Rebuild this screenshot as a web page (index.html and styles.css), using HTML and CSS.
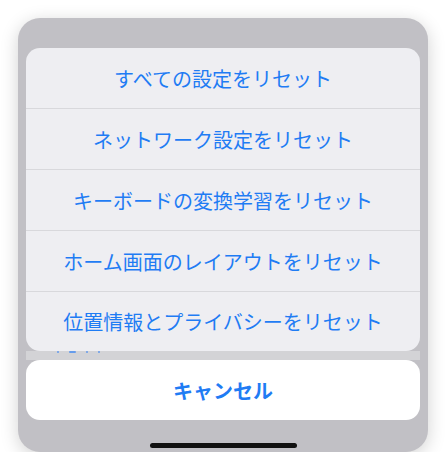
FILE: index.html
```html
<!DOCTYPE html>
<html lang="ja">
<head>
  <meta charset="UTF-8">
  <meta name="viewport" content="width=device-width, initial-scale=1">
  <title>リセット</title>
  <link rel="stylesheet" href="styles.css">
</head>
<body>
  <div class="phone">
    <div class="sheet">
      <div class="action-group">
        <button class="action">すべての設定をリセット</button>
        <button class="action">ネットワーク設定をリセット</button>
        <button class="action">キーボードの変換学習をリセット</button>
        <button class="action">ホーム画面のレイアウトをリセット</button>
        <button class="action">位置情報とプライバシーをリセット</button>
      </div>
      <!-- bits of the settings list peeking through behind the sheet -->
      <div class="behind">
        <span class="mark dot"></span>
        <span class="mark dash"></span>
        <span class="mark dot"></span>
        <span class="mark dot"></span>
      </div>
      <button class="cancel">キャンセル</button>
    </div>
    <div class="home-indicator"></div>
  </div>
</body>
</html>
```

FILE: styles.css
```css
  body {
    margin: 0;
    padding: 18px 0 0 18px;
    background: white;
    font-family: 'Noto Sans CJK JP', 'Noto Sans', sans-serif;
  }

  .phone {
    width: 410px;
    height: 434px;
    box-sizing: border-box;
    padding: 30px 8px 0 8px;
    background: #c1c0c5;
    border-radius: 22px;
    box-shadow: 0 4px 18px rgba(0, 0, 0, 0.18);
    display: flex;
    flex-direction: column;
    align-items: center;
  }

  .sheet {
    width: 100%;
    display: flex;
    flex-direction: column;
  }

  .action-group {
    background: #eeeef2;
    border-radius: 14px;
    overflow: hidden;
    display: flex;
    flex-direction: column;
  }

  .action, .cancel {
    box-sizing: border-box;
    border: none;
    background: none;
    font-family: inherit;
    font-size: 20px;
    color: #1f7cf4;
    padding: 0;
    height: 60px;
    cursor: pointer;
  }

  .action + .action {
    height: 61px;
    border-top: 1px solid #d8d8dc;
  }

  .action:last-child {
    height: 60px;
  }

  .behind {
    height: 9px;
    background: #d3d3d6;
    display: flex;
    align-items: flex-start;
    gap: 10px;
    padding-left: 31px;
  }

  .mark {
    height: 2px;
    background: #4b8ef0;
    border-radius: 1px;
    opacity: 0.8;
  }

  .mark.dot {
    width: 2px;
  }

  .mark.dash {
    width: 7px;
  }

  .cancel {
    background: white;
    border-radius: 14px;
    font-weight: bold;
  }

  .home-indicator {
    margin-top: 23px;
    width: 147px;
    height: 5px;
    border-radius: 3px;
    background: #111;
  }
```
